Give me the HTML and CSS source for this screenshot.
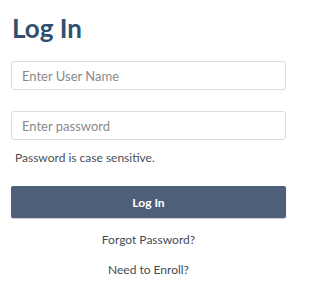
FILE: index.html
```html
<!DOCTYPE html>
<html>
<head>
<meta charset="utf-8">
<link rel="stylesheet" href="styles.css">
</head>
<body>
<main class="login">
  <h1 class="title">Log In</h1>
  <input class="field" type="text" placeholder="Enter User Name">
  <input class="field field-pw" type="password" placeholder="Enter password">
  <p class="hint">Password is case sensitive.</p>
  <button class="btn">Log In</button>
  <a class="link link-first" href="#">Forgot Password?</a>
  <a class="link" href="#">Need to Enroll?</a>
</main>
</body>
</html>
```
FILE: styles.css
```css
html, body {
  margin: 0;
  padding: 0;
  background: #ffffff;
}
body {
  font-family: Lato, "Open Sans", sans-serif;
  color: #444b53;
}
.login {
  display: flex;
  flex-direction: column;
  width: 275px;
  padding: 0 0 0 11px;
}
.title {
  margin: 11px 0 0 1px;
  font-size: 26px;
  line-height: 35px;
  font-weight: 700;
  color: #31506f;
}
.field {
  box-sizing: border-box;
  margin: 15px 0 0 0;
  height: 29px;
  width: 275px;
  border: 1px solid #dcdcdc;
  border-radius: 3px;
  padding: 0 10px;
  font-family: Lato, sans-serif;
  font-size: 13px;
  color: #333;
  outline: none;
}
.field::placeholder {
  color: #8a8a8a;
}
.field-pw {
  margin-top: 21px;
}
.hint {
  margin: 10px 0 0 4px;
  font-size: 12px;
  line-height: 16px;
  color: #4a5058;
}
.btn {
  margin-top: 20px;
  height: 32px;
  width: 275px;
  border: none;
  border-radius: 2px;
  background: #4e6079;
  color: #ffffff;
  font-family: Lato, sans-serif;
  font-size: 12px;
  font-weight: 700;
  box-shadow: 0 1px 1px rgba(0,0,0,0.2);
}
.link {
  display: block;
  text-align: center;
  font-size: 12px;
  line-height: 16px;
  color: #444b53;
  text-decoration: none;
  margin-top: 14px;
}
.link-first {
  margin-top: 14px;
}
```
